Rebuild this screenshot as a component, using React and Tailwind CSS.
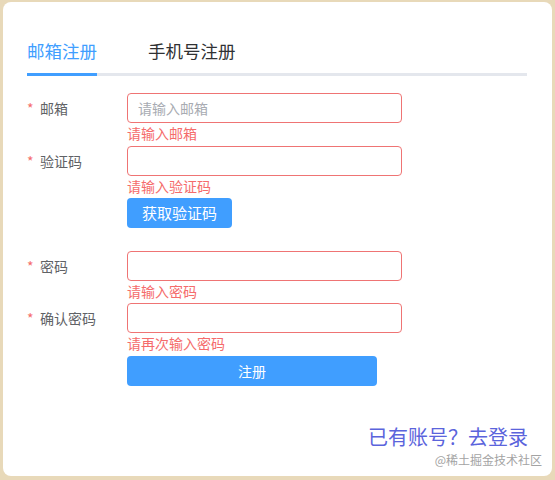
import { useState } from "react";

const font = { fontFamily: '"Microsoft YaHei", "Noto Sans CJK SC", "Noto Sans", sans-serif' };

function Row({ label, placeholder, error, children, className = "" }) {
    return (
        <div className={`flex items-start ${className}`}>
            <div className="w-[100px] h-[30px] flex items-center text-[14px] text-[#606266]">
                <span className="text-[#f56c6c] w-[13px]">*</span>
                <span>{label}</span>
            </div>
            <div className="flex flex-col">
                <input
                    className="w-[275px] h-[30px] rounded-[4px] border border-[#ef7474] px-[10px] text-[14px] text-[#606266] placeholder:text-[#a8abb2] outline-none bg-white"
                    placeholder={placeholder}
                    style={font}
                />
                <span className="text-[14px] leading-[20px] text-[#f56c6c]">{error}</span>
                {children}
            </div>
        </div>
    );
}

export default function App() {
    const [tab, setTab] = useState("email");

    return (
        <div className="w-[555px] h-[480px] bg-[#e8d9b9] pl-[3px] pt-[2px]" style={font}>
            <div className="relative w-[549px] h-[474px] rounded-lg bg-white pt-[37px] pl-[24px]">
                {/* 标签页 */}
                <div className="flex w-[500px] border-b-[3px] border-[#e4e7ed]">
                    <button
                        onClick={() => setTab("email")}
                        className={`-mb-[3px] pb-[10px] border-b-[3px] w-[70px] text-left text-[17.5px] leading-[24px] whitespace-nowrap ${tab === "email" ? "border-[#409eff] text-[#409eff]" : "border-transparent text-[#303133]"}`}
                    >
                        邮箱注册
                    </button>
                    <button
                        onClick={() => setTab("phone")}
                        className={`-mb-[3px] ml-[51px] pb-[10px] border-b-[3px] text-left text-[17.5px] leading-[24px] whitespace-nowrap ${tab === "phone" ? "border-[#409eff] text-[#409eff]" : "border-transparent text-[#303133]"}`}
                    >
                        手机号注册
                    </button>
                </div>

                <Row className="mt-[17px]" label="邮箱" placeholder="请输入邮箱" error="请输入邮箱" />
                <Row className="mt-[3px]" label="验证码" error="请输入验证码">
                    <button className="mt-[2px] w-[105px] h-[30px] rounded-[4px] bg-[#409eff] text-white text-[15px]">
                        获取验证码
                    </button>
                </Row>
                <Row className="mt-[23px]" label="密码" error="请输入密码" />
                <Row className="mt-[2px]" label="确认密码" error="请再次输入密码">
                    <button className="mt-[3px] w-[250px] h-[30px] rounded-[4px] bg-[#409eff] text-white text-[14px]">
                        注册
                    </button>
                </Row>

                <div className="mt-[37px] pr-[24px] flex justify-end">
                    <a className="text-[20px] leading-[28px] text-[#5b64dc] cursor-pointer">已有账号？去登录</a>
                </div>

                <span className="absolute right-[10px] bottom-[8px] text-[12px] leading-[16px] text-[#a3a3a3]">
                    @稀土掘金技术社区
                </span>
            </div>
        </div>
    );
}
